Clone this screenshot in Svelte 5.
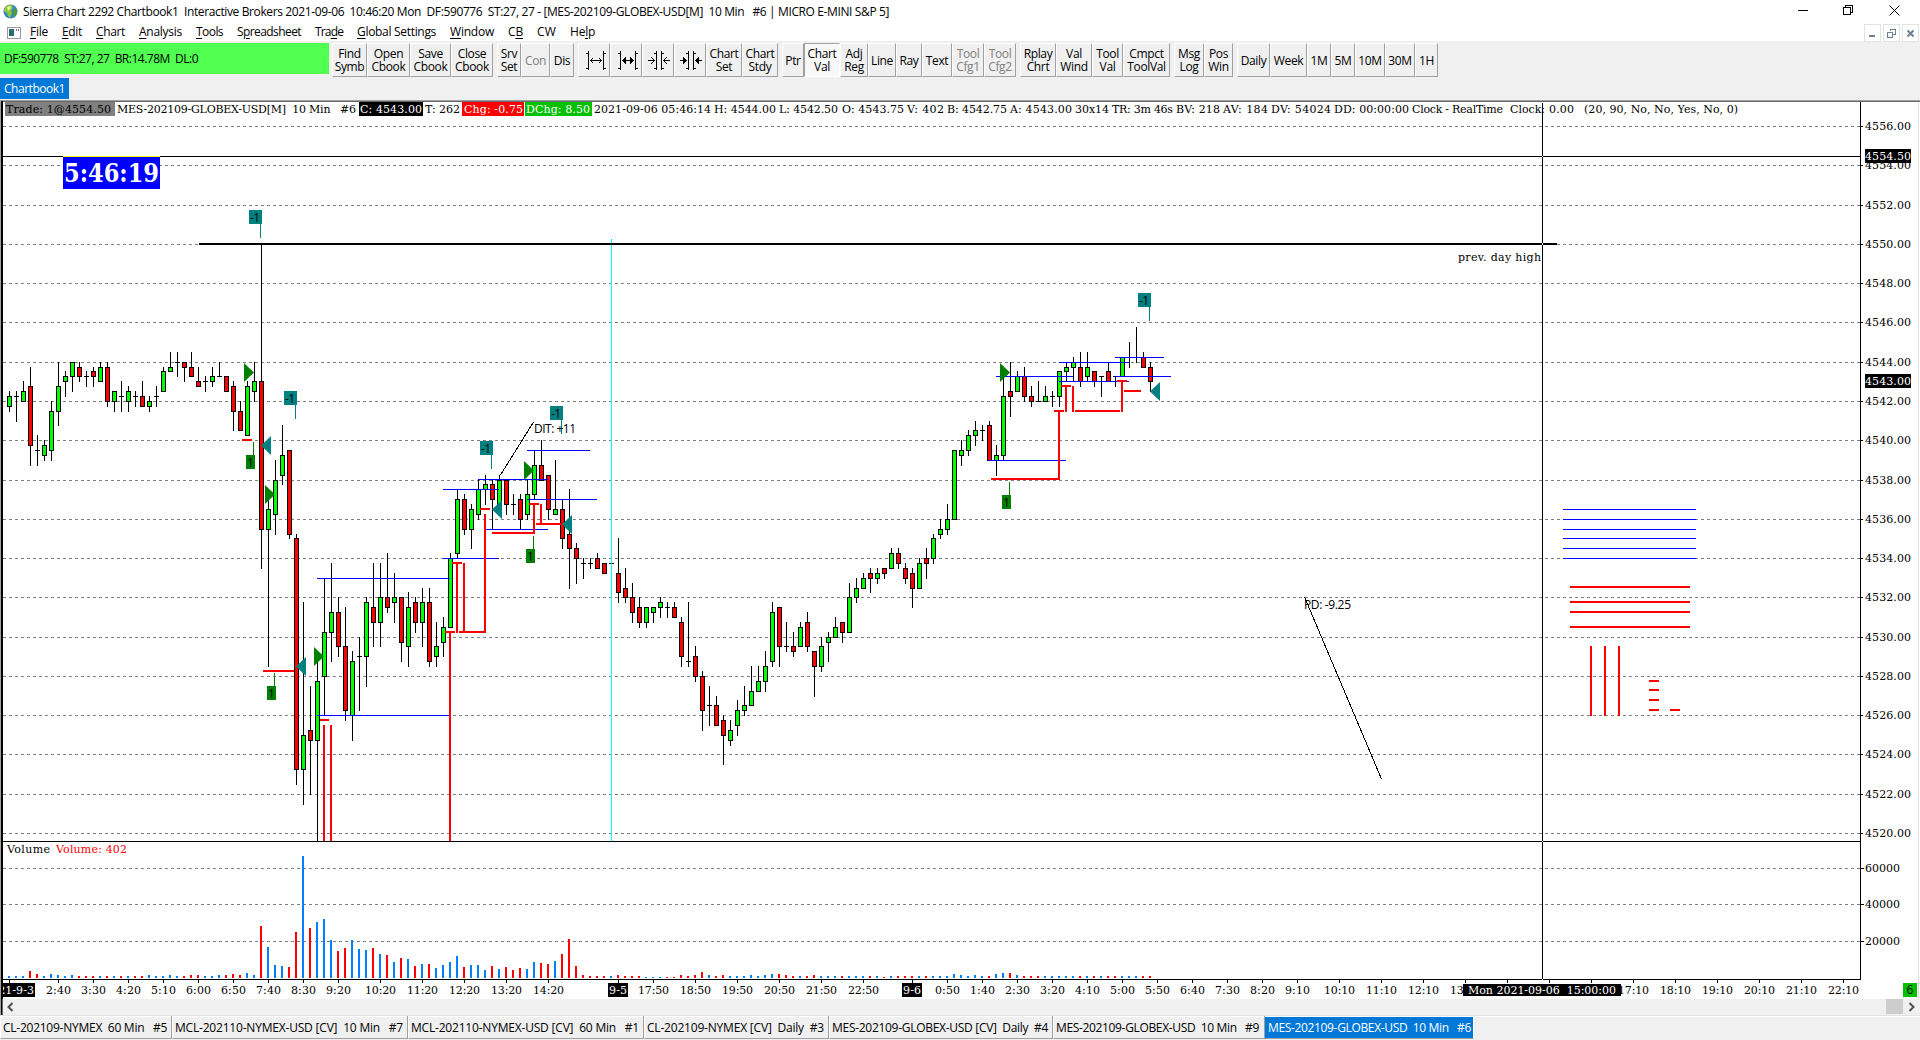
<script>
  const title = 'Sierra Chart 2292 Chartbook1  Interactive Brokers 2021-09-06  10:46:20 Mon  DF:590776  ST:27, 27 - [MES-202109-GLOBEX-USD[M]  10 Min   #6 | MICRO E-MINI S&P 5]';

  // [before, mnemonic, after, width]
  const menu = [
    ['', 'F', 'ile', 18], ['', 'E', 'dit', 20], ['', 'C', 'hart', 29], ['', 'A', 'nalysis', 43],
    ['', 'T', 'ools', 27], ['S', 'p', 'readsheet', 64], ['Tra', 'd', 'e', 28],
    ['', 'G', 'lobal Settings', 79], ['', 'W', 'indow', 44], ['C', 'B', '', 15],
    ['CW', '', '', 19], ['He', 'l', 'p', 25]
  ];

  const toolbar = [
    [['Find', 'Symb', 35], ['Open', 'Cbook', 43], ['Save', 'Cbook', 41], ['Close', 'Cbook', 42]],
    [['Srv', 'Set', 24], ['Con', '', 29, 'off'], ['Dis', '', 24]],
    [['i1', '', 32, 'icon'], ['i2', '', 32, 'icon'], ['i3', '', 32, 'icon'], ['i4', '', 32, 'icon'], ['Chart', 'Set', 36], ['Chart', 'Stdy', 36]],
    [['Ptr', '', 22], ['Chart', 'Val', 36, 'down'], ['Adj', 'Reg', 28], ['Line', '', 28], ['Ray', '', 26], ['Text', '', 30], ['Tool', 'Cfg1', 32, 'off'], ['Tool', 'Cfg2', 32, 'off']],
    [['Rplay', 'Chrt', 36], ['Val', 'Wind', 36], ['Tool', 'Val', 31], ['Cmpct', 'ToolVal', 47]],
    [['Msg', 'Log', 30], ['Pos', 'Win', 29]],
    [['Daily', '', 33], ['Week', '', 37], ['1M', '', 24], ['5M', '', 24], ['10M', '', 30], ['30M', '', 30], ['1H', '', 23]]
  ];

  const tabs = [
    ['CL-202109-NYMEX  60 Min   #5', 172, 164], ['MCL-202110-NYMEX-USD [CV]  10 Min   #7', 236, 228],
    ['MCL-202110-NYMEX-USD [CV]  60 Min   #1', 236, 228], ['CL-202109-NYMEX [CV]  Daily  #3', 185, 177],
    ['MES-202109-GLOBEX-USD [CV]  Daily  #4', 224, 216], ['MES-202109-GLOBEX-USD  10 Min   #9', 212, 203],
    ['MES-202109-GLOBEX-USD  10 Min   #6', 209, 203]
  ];

  // x, text, width, fill, background
  const header = [
    [6, 'Trade: 1@4554.50', 105, '#000', '#808080', 5, 110],
    [117, 'MES-202109-GLOBEX-USD[M]  10 Min   #6', 239, '#000'],
    [360, 'C: 4543.00', 62, '#fff', '#000', 359, 64],
    [425, 'T: 262', 35, '#000'],
    [464, 'Chg: -0.75', 59, '#fff', '#f00', 462, 62],
    [526, 'DChg: 8.50', 64, '#fff', '#00c000', 525, 67],
    [594, '2021-09-06 05:46:14', 117, '#000'], [714, 'H: 4544.00', 62, '#000'], [779, 'L: 4542.50', 59, '#000'],
    [842, 'O: 4543.75', 62, '#000'], [907, 'V: 402', 37, '#000'], [947, 'B: 4542.75', 60, '#000'],
    [1010, 'A: 4543.00', 62, '#000'], [1075, '30x14', 34, '#000'], [1112, 'TR: 3m 46s', 61, '#000'],
    [1176, 'BV: 218', 44, '#000'], [1223, 'AV: 184', 45, '#000'], [1271, 'DV: 54024', 60, '#000'],
    [1334, 'DD: 00:00:00', 75, '#000'], [1412, 'Clock - RealTime', 91, '#000'], [1510, 'Clock:', 35, '#000'],
    [1549, '0.00', 25, '#000'], [1584, '(20, 90, No, No, Yes, No, 0)', 154, '#000']
  ];

  // g = up, r = down, d = doji; then high, body top, body bottom, low (above 4500)
  const bars = `g 42.5 42.25 41.75 41.5|d 42.5 42.25 42.25 41|g 43 42.5 42 42|r 43.75 42.75 39.75 38.75|d 40.25 39.5 39.5 38.75|g 40 39.75 39.25 39|g 42 41.5 39.5 39|g 44 42.75 41.5 40.75
g 43.5 43.25 43 42.25|g 44 44 43.25 42.5|r 44 43.75 43.25 43|d 43.5 43.25 43.25 42.75|r 43.75 43.5 43.25 42.75|g 44 43.75 43 43|r 44 43.75 42 41.75|g 42.5 42.5 42 41.5
d 43 42.25 42.25 41.5|g 42.75 42.5 42 41.5|d 42.5 42.25 42.25 41.75|r 43 42.25 41.75 41.75|g 42.25 42 41.75 41.5|d 42.75 42.25 42.25 41.75|g 43.75 43.5 42.5 42.5|g 44.5 43.75 43.5 43.5
d 44.5 44 44 43.25|r 44 44 43.75 43|r 44.5 43.75 43.25 43.25|r 43.75 43 42.75 42.75|d 43.25 43 43 42.5|g 43.75 43.25 43 42.75|d 44 43.25 43.25 43.25|r 43.25 43.25 42.5 42.5
r 43 42.75 41.5 40.5|r 42 41.5 40.5 40.5|g 43 42.75 40.25 40.25|g 44 43 42.5 42|r 50 43 35.5 33.5|g 37 36.5 35.5 28.5|g 39 38 36.25 35.25|g 40.75 39.25 38.25 37.75
r 39.5 39.5 35.25 35|r 35.25 35 23.25 22.5|g 31.75 25 23.25 21.5|r 27.5 25.25 24.75 22|g 28.75 27.75 24.75 19.5|g 33 30.25 28 26|g 33.75 31.25 30.25 28.75|r 32 31.25 29.5 29
r 31.5 29.5 26.25 25.75|g 29.25 28.75 26 24.75|d 30 29 29 26.25|g 32 31.75 29 27.5|r 33.75 31.5 30.75 29.5|g 33.75 32 30.75 29.5|r 34.25 32 31.5 31.25|g 33.25 32 31.75 30.75
r 32 32 29.75 28.75|g 32.25 31.5 29.5 28.5|r 32 31.75 30.75 30.25|g 32.5 31.75 30.75 29.5|r 32.5 31.75 28.75 28.5|g 30.75 29.5 29 28.5|g 31 30.5 29.75 29|g 34.25 34 30.5 30.5
g 37.5 37 34.25 34|r 37.25 37 35.5 35.25|g 36.75 36.5 35.5 34.5|g 38 37.5 36.25 36|g 38.25 37.75 37.5 36.75|r 38 37.75 37 35.5|g 38.25 38 36.75 36.75|r 38 38 36.75 36.25
d 37.25 36.75 36.75 36.25|r 37.25 37 36 35.5|g 38 37.25 36.25 36|g 39.5 38.75 37.25 37|r 40 38.75 38 38|r 38.25 38.25 36.5 36|g 39 36.5 36.25 36.25|r 37 36.5 35 34.5
r 37.5 35.25 34.5 32.5|r 34.75 34.5 34 32.75|d 34 33.75 33.75 33|d 34 33.75 33.75 33.5|r 34.25 34 33.5 33.5|r 33.75 33.75 33.25 33.25|d 33.75 33.75 33.75 33.75|r 35 33.25 32.25 31.75
r 33.5 32.5 32 31.75|r 32.75 32 31.25 30.75|r 32 31.5 30.75 30.5|g 31.5 31.5 30.75 30.5|g 31.5 31.5 31.25 30.75|g 32 31.75 31.5 31|d 31.75 31.5 31.5 31|r 31.75 31.5 31 31
r 31 30.75 29 28.5|d 31.75 28.75 28.75 28.5|r 29.5 29 28 27.75|r 28.25 28 26.25 25.25|d 27.5 26.5 26.5 25.5|r 27 26.5 25.5 25.5|r 26 25.75 25 23.5|g 25.75 25.25 24.75 24.5
g 26.75 26.25 25.5 25|g 27.5 26.5 26.25 26|g 28.5 27.25 26.5 26.5|g 28.5 27.75 27.25 27.25|g 29.25 28.5 27.75 27.25|g 31.75 31.25 28.75 28.5|r 31.5 31.5 29.5 28.5|d 30.75 29.5 29.5 29.25
r 30.25 29.5 29.25 29|g 30.75 30.5 29.5 29.5|r 31.25 30.75 29.5 29.25|r 29.25 29.25 28.5 27|g 30 29.5 28.5 28.25|g 30.25 30 29.75 28.75|g 31 30.5 30 30|r 30.75 30.75 30.25 29.75
g 32.75 32 30.25 30.25|g 33 32.5 32 31.75|g 33.25 33 32.5 32.5|r 33.5 33.25 33 32.25|g 33.5 33.25 33 32.75|r 33.5 33.5 33.25 33|g 34.5 34.25 33.5 33.5|r 34.5 34.25 33.75 33.5
r 33.75 33.5 33 32.75|r 33.5 33.25 32.5 31.5|g 34 33.75 32.5 32.5|r 34.5 34 33.75 33|g 35.25 35 34 33.75|g 36 35.5 35.25 35|g 36.75 36 35.5 35.25|g 39.5 39.5 36 36
g 40 39.5 39.25 38.75|g 40.5 40.25 39.5 39.25|g 41 40.5 40.25 39.75|d 40.75 40.5 40.5 40|r 41 40.75 39 39|g 39.75 39.25 39 38.25|g 43.25 42.25 39.25 39|r 44 42.5 42.25 41.25
g 43.5 43.25 42.5 42.5|r 43.75 43.25 42.25 42|r 42.75 42.25 42 41.75|d 43 42 42 42|g 42.75 42.25 42 42|d 42.5 42.25 42.25 41.75|g 43.5 43.5 42.25 41.75|g 44 43.75 43.5 43
g 44.25 44 43.75 43|r 44.5 43.75 43 42.75|g 44.5 43.75 43.25 43|r 43.5 43.5 43 42.75|d 43.25 43.25 43.25 42.25|r 44 43.5 43 43|d 43.25 43.25 43.25 42.75|g 44.25 44.25 43.25 43.25
d 45 44.25 44.25 43.75|d 45.75 44.25 44.25 44|r 44.5 44.25 43.75 43.75|r 44 43.75 43 42.5`;

  const yOf = (p) => Math.round(126 + (56 - p) * 19.639);
  const candles = bars.split(/[|\n]/).map((s, i) => {
    const [kind, ...p] = s.split(' ');
    const [high, top, bottom, low] = p.map((v) => yOf(+v));
    return { kind, x: 9 + i * 7, high, top, bottom, low };
  });

  // volume bar heights, colour first
  const volume = ('b2 b2 b2 r7 r4 b2 b4 b3 b2 b3 r2 r2 r2 b2 r2 b2 r2 b2 r2 r2 b3 b2 b2 b3 b2 r2 r3 r3 b2 b2 b3 r3 r4 r3 b5 b3 ' +
    'r52 b31 b13 b12 r11 r46 b122 r50 b56 b59 b38 r27 r30 b38 b29 b28 r30 b24 r23 b16 r20 b19 r12 b14 r14 b10 b13 b16 b22 r11 b13 b13 b8 ' +
    'r12 b9 r11 r8 r10 b9 b16 r15 r14 b17 r24 r39 r12 r3 r2 r2 r2 b2 r3 r2 r2 r2 b1 b1 b1 r1 r1 r3 r2 r3 r6 b3 r2 r3 b2 b2 b2 b3 b2 b3 b4 ' +
    'r4 r3 r2 b2 r2 r3 b2 b2 b2 r2 b2 b2 b2 r2 b2 r1 b2 r2 r2 r2 b2 r2 b2 b2 b2 b4 b3 b2 b3 b2 r2 b4 b5 r5 b3 r2 r2 r2 b2 b2 b2 b2 b2 r2 b2 ' +
    'r2 b2 r2 r2 b2 b2 b2 r2 r2').split(' ').map((s, i) => ({ up: s[0] === 'b', x: 8 + i * 7, h: +s.slice(1) }));

  const prices = Array.from({ length: 19 }, (_, i) => 56 - i * 2);
  const volGrid = [[868, '60000'], [904, '40000'], [941, '20000']];

  // a tick without a label sits behind the cursor's date box or a day box
  const times = [
    [9, ''], [58, '2:40'], [93, '3:30'], [128, '4:20'], [163, '5:10'], [198, '6:00'], [233, '6:50'], [268, '7:40'], [303, '8:30'], [338, '9:20'],
    [380, '10:20'], [422, '11:20'], [464, '12:20'], [506, '13:20'], [548, '14:20'], [618, ''], [653, '17:50'], [695, '18:50'], [737, '19:50'],
    [779, '20:50'], [821, '21:50'], [863, '22:50'], [912, ''], [947, '0:50'], [982, '1:40'], [1017, '2:30'], [1052, '3:20'], [1087, '4:10'],
    [1122, '5:00'], [1157, '5:50'], [1192, '6:40'], [1227, '7:30'], [1262, '8:20'], [1297, '9:10'], [1339, '10:10'], [1381, '11:10'],
    [1423, '12:10'], [1465, '13:10'], [1507, ''], [1549, ''], [1591, ''], [1633, '17:10'], [1675, '18:10'],
    [1717, '19:10'], [1759, '20:10'], [1801, '21:10'], [1843, '22:10']
  ];

  // x, y, width
  const blueLines = [
    [317, 578, 133], [317, 715, 133], [443, 489, 56], [478, 479, 70], [443, 558, 56], [485, 529, 63], [527, 499, 70], [527, 450, 63],
    [996, 376, 77], [1059, 362, 70], [1059, 381, 70], [1115, 357, 49], [1115, 376, 56], [989, 460, 77],
    [1563, 509, 133], [1563, 519, 133], [1563, 529, 133], [1563, 538, 133], [1563, 548, 133], [1563, 558, 133]
  ];
  // x, y, width, height
  const redLines = [
    [242, 439, 10, 2], [263, 670, 31, 2], [320, 719, 9, 2], [323, 725, 2, 116], [330, 725, 2, 116], [449, 632, 2, 209],
    [445, 631, 10, 2], [459, 631, 27, 2], [456, 563, 2, 70], [463, 563, 2, 70], [452, 562, 10, 2], [484, 514, 2, 118],
    [480, 508, 10, 2], [492, 532, 43, 2], [533, 504, 2, 29], [529, 503, 10, 2], [540, 504, 2, 21], [536, 523, 27, 2],
    [991, 478, 69, 2], [1058, 411, 2, 69], [1054, 410, 10, 2], [1065, 386, 2, 26], [1061, 385, 10, 2], [1072, 386, 2, 26],
    [1075, 410, 45, 2], [1121, 381, 2, 31], [1117, 380, 10, 2], [1124, 390, 17, 2],
    [1570, 586, 120, 2], [1570, 601, 120, 2], [1570, 611, 120, 2], [1570, 626, 120, 2],
    [1590, 646, 2, 70], [1604, 646, 2, 70], [1618, 646, 2, 70],
    [1649, 680, 10, 2], [1649, 689, 10, 2], [1649, 699, 10, 2], [1649, 709, 10, 2], [1670, 709, 10, 2]
  ];

  const shorts = [[249, 210], [284, 391], [480, 441], [550, 406], [1138, 293]];
  const longs = [[246, 455], [267, 686], [526, 549], [1002, 495]];
  const entries = [[244, 363], [265, 485], [314, 647], [524, 461], [1000, 363]];
  const exits = [[261, 436], [296, 657], [492, 500], [562, 515], [1150, 382]];

  // spread or squeeze a label so it fills the given width
  function fit(node, width) {
    const extra = width - node.getBoundingClientRect().width;
    node.style.letterSpacing = extra / node.textContent.length + 'px';
  }
</script>

<div class="window">
  <div class="titlebar">
    <svg class="globe" width="15" height="15" viewBox="0 0 15 15">
      <circle cx="7.5" cy="7.5" r="7" fill="#2f86c8" />
      <path d="M2 3Q5 0 9 1L10 4 8 7 9 9 7 14Q4 12 4 9L1 7Z" fill="#8cc63c" />
      <path d="M11 5l3 0v5l-3 3-1-4z" fill="#4f9a2c" />
      <path d="M4 3l3-1 1 2-3 3z" fill="#e6f3a0" />
    </svg>
    <span class="title" use:fit={866}>{title}</span>
    <svg class="winbtns" width="120" height="24" shape-rendering="crispEdges" fill="none" stroke="#000">
      <path d="M6 10.500h10M51.500 7.500h7v7h-7zM53.500 7V5.500h7v7H59" />
      <path d="M97.500 5.500l10 10M107.500 5.500l-10 10" shape-rendering="auto" />
    </svg>
  </div>

  <div class="menubar">
    <svg class="docicon" width="14" height="12" viewBox="0 0 14 12" shape-rendering="crispEdges">
      <rect width="14" height="12" fill="#9a9a9a" /><rect x="1" y="1" width="12" height="10" fill="#fff" />
      <rect x="2" y="2" width="5" height="7" fill="#2c6e70" /><rect x="9" y="2" width="1" height="2" fill="#777" /><rect x="11" y="2" width="1" height="2" fill="#777" />
    </svg>
    {#each menu as [a, key, b, w]}
      <span class="item"><span class="fit" use:fit={w}>{a}<u>{key}</u>{b}</span></span>
    {/each}
    <div class="mdi">
      <svg width="17" height="18" shape-rendering="crispEdges"><rect x="5" y="11" width="6" height="2" fill="#6d7f92" /></svg>
      <svg width="17" height="18" shape-rendering="crispEdges"><path d="M4.500 8v5h5v-5zM4 8.500h6M7 5.500h6M7.500 7V5.500h4.500v5H10" fill="none" stroke="#6d7f92" /></svg>
      <svg width="17" height="18"><path d="M5.500 6.500l6 6M11.500 6.500l-6 6" stroke="#6d7f92" stroke-width="2" /></svg>
    </div>
  </div>

  <div class="toolbar">
    <div class="status"><span class="fit" use:fit={194}>DF:590778  ST:27, 27  BR:14.78M  DL:0</span></div>
    {#each toolbar as group}
      <div class="group">
        {#each group as [a, b, w, state]}
          <div class="btn {state ?? ''}" style="width: {w}px">
            {#if state === 'icon'}
              <svg width="30" height="32" shape-rendering="crispEdges" stroke="#000" fill="none">
                {#if a === 'i1' || a === 'i2'}
                  <path d="M9.500 7v19M24.500 7v19M7 9.500h2M7 24.500h2M25 9.500h2M25 24.500h2M11 16.500h12" />
                  {#if a === 'i1'}
                    <path d="M13.500 14v1M12.500 15v1M12.500 17v1M13.500 18v1M20.500 14v1M21.500 15v1M21.500 17v1M20.500 18v1" />
                  {:else}
                    <path d="M12.500 15v3M13.500 14v5M14.500 13v7M21.500 15v3M20.500 14v5M19.500 13v7" />
                  {/if}
                {:else}
                  <path d="M13.500 7v19M18.500 7v19M11 9.500h2M11 24.500h2M19 9.500h2M19 24.500h2M5 16.500h7M20 16.500h7" />
                  {#if a === 'i3'}
                    <path d="M8.500 13v1M9.500 14v1M10.500 15v1M10.500 17v1M9.500 18v1M8.500 19v1M23.500 13v1M22.500 14v1M21.500 15v1M21.500 17v1M22.500 18v1M23.500 19v1" />
                  {:else}
                    <path d="M8.500 13v7M9.500 14v5M10.500 15v3M23.500 13v7M22.500 14v5M21.500 15v3" />
                  {/if}
                {/if}
              </svg>
            {:else}
              <span>{a}</span>{#if b}<span>{b}</span>{/if}
            {/if}
          </div>
        {/each}
      </div>
    {/each}
  </div>

  <div class="books"><div class="book"><span class="fit" use:fit={61}>Chartbook1</span></div></div>

  <div class="chartframe">
    <svg class="chart" width="1917" height="897" viewBox="3 102 1917 897">
      <g shape-rendering="crispEdges">
        {#each prices as p}
          <line x1="3" x2="1860" y1={yOf(p) + 0.5} y2={yOf(p) + 0.5} class="grid" />
          <rect x="1861" y={yOf(p)} width="2" height="1" />
        {/each}
        {#each volGrid as [y]}
          <line x1="3" x2="1860" y1={y + 0.5} y2={y + 0.5} class="grid" />
          <rect x="1861" y={y} width="3" height="1" />
        {/each}

        {#each candles as c}
          {#if c.low > c.high}<rect x={c.x} y={c.high} width="1" height={Math.min(c.low + 1, 841) - c.high} />{/if}
          {#if c.kind === 'd'}
            <rect x={c.x - 2} y={c.top} width="5" height="1" />
          {:else}
            <rect x={c.x - 1.5} y={c.top + 0.5} width="4" height={c.bottom - c.top} stroke="#000" fill={c.kind === 'g' ? '#0f0' : '#f00'} />
          {/if}
        {/each}

        <rect x="611" y="239" width="1" height="602" fill="#0ff" />
        {#each blueLines as [x, y, w]}<rect {x} {y} width={w} height="1" fill="#00f" />{/each}
        {#each redLines as [x, y, w, h]}<rect {x} {y} width={w} height={h} fill="#f00" />{/each}

        <rect x="3" y="156" width="1857" height="1" />
        <rect x="199" y="243" width="1358" height="2" />
        <rect x="3" y="841" width="1857" height="1" />
        <rect x="3" y="979" width="1858" height="1" />
        <rect x="1860" y="102" width="1" height="878" />

        {#each volume as v}<rect x={v.x} y={978 - v.h} width="2" height={v.h} fill={v.up ? '#0080ff' : '#f00'} />{/each}

        <path d="M500.500 475L533.500 422M1304.500 597L1381.500 779" stroke="#000" />
      </g>

      {#each shorts as [x, y]}
        <rect {x} {y} width="13" height="14" fill="#008080" />
        <rect x={x + 11} y={y + 14} width="1" height="14" fill="#008080" />
        <text class="ui" x={x + 1} y={y + 12} textLength="10">-1</text>
      {/each}
      {#each longs as [x, y]}
        <rect {x} {y} width="9" height="14" fill="#008000" />
        <rect x={x + 7} y={y - 13} width="1" height="13" fill="#008000" />
        <text class="ui" x={x + 1} y={y + 12}>1</text>
      {/each}
      {#each entries as [x, y]}<path d="M{x} {y}l10 9.500-10 9.500z" fill="#008000" />{/each}
      {#each exits as [x, y]}<path d="M{x + 10} {y}v19l-10-9.500z" fill="#008080" />{/each}

      <text class="ui" x="534" y="433" textLength="42">DIT: +11</text>
      <text class="ui" x="1304" y="609" textLength="47">PD: -9.25</text>
      <text x="1458" y="261" textLength="83">prev. day high</text>

      <rect x="63" y="156" width="97" height="33" fill="#00f" />
      <rect x="63" y="156" width="97" height="1" fill="#ff0" />
      <text class="clock" x="64" y="182" textLength="95" lengthAdjust="spacingAndGlyphs">5:46:19</text>

      {#each header as [x, text, w, fill, bg, bx, bw]}
        {#if bg}<rect x={bx} y="102" width={bw} height="14" fill={bg} />{/if}
        <text {x} y="113" textLength={w} {fill}>{text}</text>
      {/each}

      {#each prices as p}<text x="1865" y={yOf(p) + 4} textLength="46">45{p}.00</text>{/each}
      {#each volGrid as [y, label]}<text x="1865" y={y + 4} textLength="35">{label}</text>{/each}
      <rect x="1865" y="149" width="46" height="14" /><text x="1865" y="160" textLength="46" fill="#fff">4554.50</text>
      <rect x="1865" y="374" width="46" height="14" /><text x="1865" y="385" textLength="46" fill="#fff">4543.00</text>

      <text x="7" y="853" textLength="43">Volume</text>
      <text x="56" y="853" textLength="71" fill="#f00">Volume: 402</text>

      {#each times as [x, label]}
        <rect {x} y="980" width="1" height="3" />
        {#if label}<text x={x + 0.5} y="994" text-anchor="middle" textLength={label.length * 6 + 1}>{label}</text>{/if}
      {/each}
      <rect x="3" y="983" width="32" height="14" /><text x="-16" y="994" textLength="50" fill="#fff">2021-9-3</text>
      <rect x="608" y="983" width="20" height="14" /><text x="609" y="994" textLength="18" fill="#fff">9-5</text>
      <rect x="902" y="983" width="20" height="14" /><text x="903" y="994" textLength="18" fill="#fff">9-6</text>
      <rect x="1463" y="984" width="158" height="12" /><text x="1468" y="994" textLength="148" fill="#fff">Mon 2021-09-06  15:00:00</text>
      <rect x="1903" y="983" width="14" height="14" fill="#00c000" /><text class="ui" x="1906.500" y="994">6</text>

      <rect x="1542" y="103" width="1" height="877" />
      <g fill="#fff"><rect x="1542" y="156" width="1" height="1" /><rect x="1542" y="243" width="1" height="2" /><rect x="1542" y="841" width="1" height="1" /><rect x="1542" y="979" width="1" height="1" /></g>
      <rect x="1918" y="102" width="1" height="897" fill="#e3e3e3" />
    </svg>
    <div class="scroll">
      <svg width="17" height="16"><path d="M9.500 4L5.500 8l4 4" /></svg>
      <span class="thumb"></span>
      <svg width="17" height="16"><path d="M6.500 4l4 4-4 4" /></svg>
    </div>
  </div>

  <div class="tabs">
    {#each tabs as [label, w, tw], i}
      <div class="tab" class:active={i === 6} style="width: {w}px"><span class="fit" use:fit={tw}>{label}</span></div>
    {/each}
  </div>
</div>

<style>
  :global(body) { margin: 0; overflow: hidden; }
  .window { width: 1920px; height: 1040px; display: flex; flex-direction: column; background: #f0f0f0; color: #000;
            font: 12px/13px "Open Sans", "Noto Sans", sans-serif; white-space: pre; overflow: hidden; }
  .fit, .title { display: inline-block; }

  .titlebar { height: 24px; display: flex; align-items: flex-start; background: #fff; }
  .globe { margin: 4px 5px 0 3px; }
  .title { margin-top: 5px; }
  .winbtns { margin-left: auto; margin-right: 8px; }

  .menubar { height: 17px; display: flex; align-items: flex-start; background: #fff; gap: 14px; padding-left: 7px; }
  .docicon { margin: 3px -5px 0 0; }
  .item { margin-top: 1px; }
  .item u { text-underline-offset: 2px; text-decoration-thickness: 1px; }
  .mdi { margin-left: auto; display: flex; gap: 2px; margin-right: 1px; }
  .mdi svg { background: #fff; outline: 1px solid #e3e3e3; outline-offset: -1px; }

  .toolbar { height: 37px; display: flex; align-items: flex-start; gap: 4px; }
  .status { width: 325px; height: 31px; margin: 2px -1px 0 0; padding-left: 4px; display: flex; align-items: center; background: #50ff50; }
  .group { display: flex; margin-top: 2px; }
  .btn { box-sizing: border-box; height: 34px; display: flex; flex-direction: column; align-items: center; justify-content: center;
         border: 1px solid; border-color: #fff #a0a0a0 #a0a0a0 #fff; letter-spacing: -.35px; }
  .btn.off { color: #808080; }
  .btn.down { border-color: #a0a0a0 #fff #fff #a0a0a0; background: #f8f8f8; }

  .books { height: 22px; display: flex; }
  .book { width: 65px; height: 21px; padding-left: 4px; display: flex; align-items: center; background: #0078d7; color: #fff; }

  .chartframe { box-sizing: border-box; height: 915px; border-top: 1px solid #a0a0a0; border-left: 1px solid #a0a0a0;
                background: #000; display: flex; flex-direction: column; }
  .chart { display: block; flex: none; background: #fff; border-top: 1px solid #696969; margin-left: 2px; font: 11px "DejaVu Serif", serif; white-space: pre; }
  .chart text { white-space: pre; }
  .grid { stroke: #808080; stroke-dasharray: 3 3; }
  .chart .ui { font: 12px "Open Sans", sans-serif; }
  .chart .clock { font: bold 26px "DejaVu Serif", serif; fill: #fff; }
  .scroll { height: 16px; margin-left: 1px; border-left: 1px solid #696969; background: #f0f0f0; display: flex; }
  .scroll path { fill: none; stroke: #505050; stroke-width: 2; }
  .thumb { width: 17px; height: 15px; margin-left: auto; background: #cdcdcd; }

  .tabs { height: 24px; display: flex; align-items: flex-end; box-shadow: inset 0 1px #e3e3e3, inset 0 2px #fff; }
  .tab { box-sizing: border-box; height: 23px; padding-left: 2px; display: flex; align-items: center;
         border-right: 1px solid #a0a0a0; border-bottom: 1px solid #a0a0a0; border-left: 1px solid #fff; }
  .tab.active { height: 22px; background: #0078d7; color: #fff; border-color: #0078d7 #fff #a0a0a0 #0078d7; }
</style>
